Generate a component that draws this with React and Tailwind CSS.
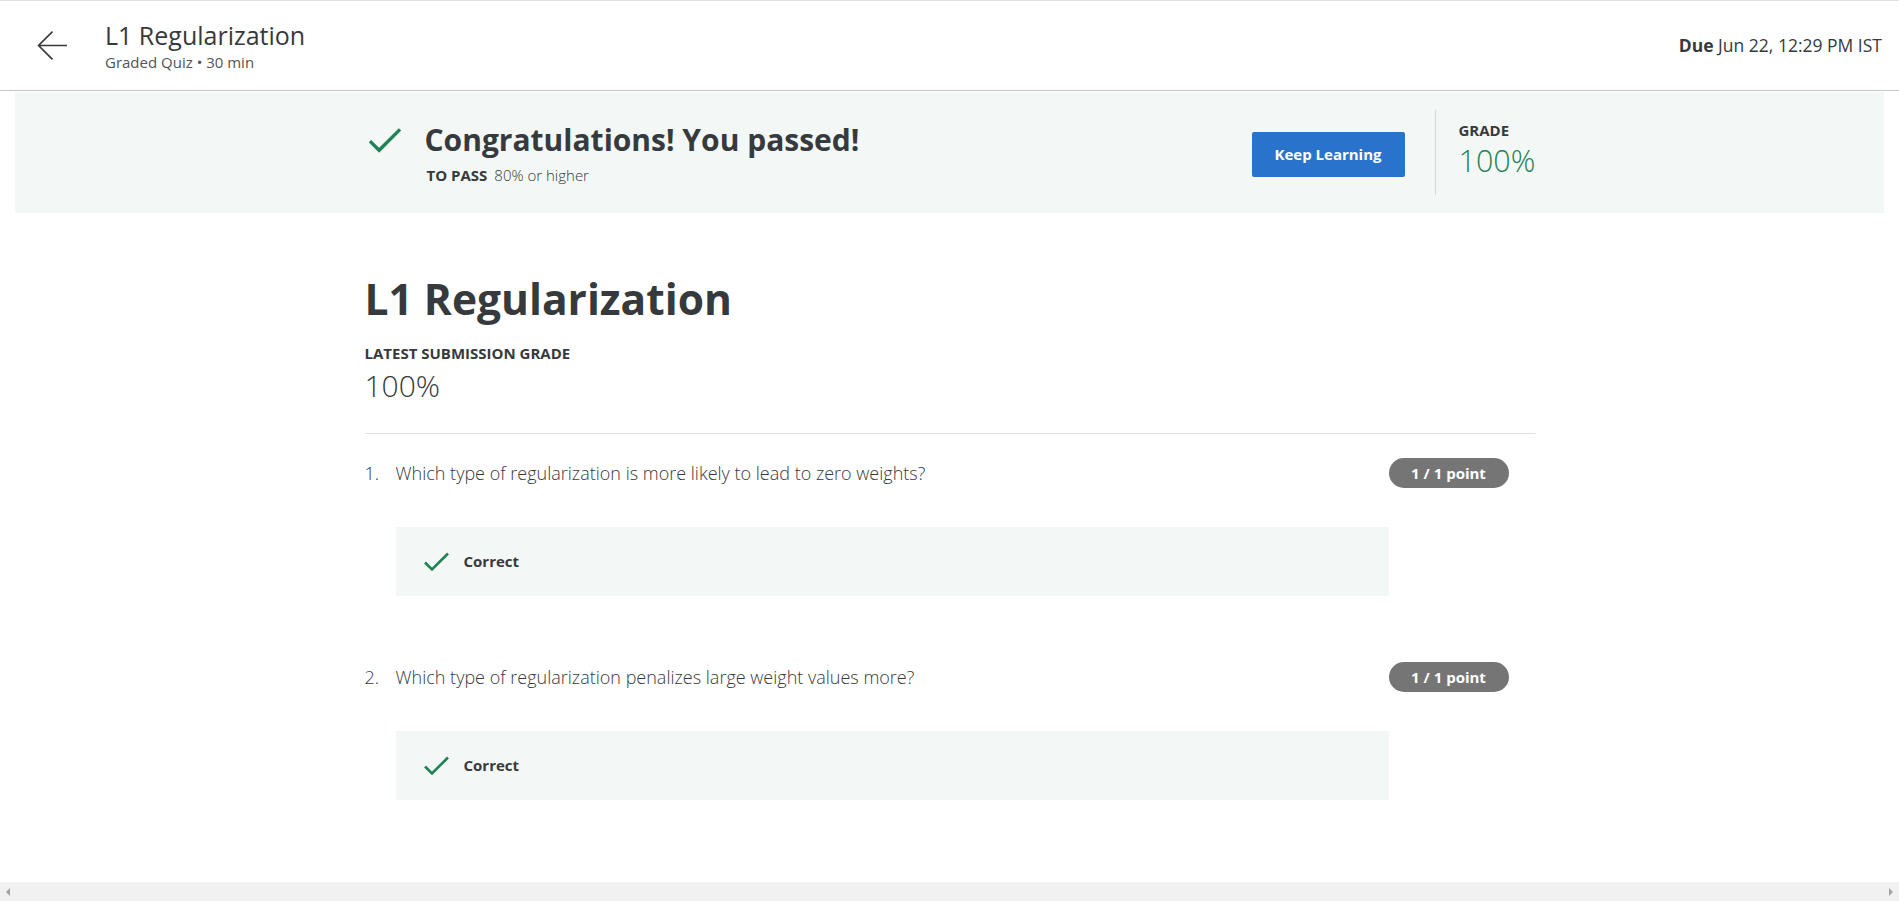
import React from "react";

const questions = [
    { n: 1, text: "Which type of regularization is more likely to lead to zero weights?" },
    { n: 2, text: "Which type of regularization penalizes large weight values more?" },
];

function Check({ className }) {
    return (
        <svg viewBox="0 0 26 20" className={className} fill="none">
            <path d="M1.5 10.5 L8.5 17.5 L24.5 1.5" stroke="#1f8354" strokeWidth="2.6" />
        </svg>
    );
}

export default function App() {
    return (
        <div
            className="flex flex-col h-screen overflow-hidden bg-white text-[#373a3c]"
            style={{ fontFamily: '"Open Sans", "Liberation Sans", sans-serif' }}
        >
            {/* HEADER */}
            <div className="flex items-center justify-between h-[91px] border-t border-[#e1e1e1] border-b border-b-[#c6c6c6] shrink-0">
                <div className="flex items-center">
                    <button className="ml-[37px] mr-[37px]">
                        <svg viewBox="0 0 30 30" className="w-[31px] h-[31px]" fill="none">
                            <path d="M29 15 H2 M15 1.5 L1.5 15 L15 28.5" stroke="#373a3c" strokeWidth="1.6" />
                        </svg>
                    </button>
                    <div>
                        <div className="text-[25px] leading-[32px] text-[#373a3c]">L1 Regularization</div>
                        <div className="text-[15px] leading-[20px] mt-[1px] text-[#545454]">Graded Quiz • 30 min</div>
                    </div>
                </div>
                <div className="pr-[17px] text-[17.5px]">
                    <span className="font-bold">Due</span> Jun 22, 12:29 PM IST
                </div>
            </div>

            {/* PASS BANNER */}
            <div className="mx-[15px] mt-[1px] bg-[#f3f8f6] py-[18px] shrink-0">
                <div className="w-[1170px] mx-auto flex items-center h-[85px]">
                    <div className="flex-1 flex items-start pl-[3px]">
                        <Check className="w-[34px] h-[27px] mt-[7px]" />
                        <div className="ml-[23px]">
                            <div className="text-[30px] leading-[40px] font-bold text-[#373a3c]">
                                Congratulations! You passed!
                            </div>
                            <div className="text-[15px] leading-[20px] mt-[5px] ml-[2px]">
                                <span className="font-bold">TO PASS</span>
                                <span className="ml-[7px] font-light">80% or higher</span>
                            </div>
                        </div>
                    </div>
                    <button className="w-[153px] h-[45px] rounded-[2px] bg-[#2a73cc] text-white text-[15px] font-bold mt-[4px]">
                        Keep Learning
                    </button>
                    <div className="ml-[30px] h-full border-l border-[#d9d9d9] pl-[23px] w-[100px] pt-[11px] flex flex-col gap-[2px]">
                        <div className="text-[15px] leading-[18px] font-bold">GRADE</div>
                        <div className="text-[30.5px] leading-[38px] font-light text-[#1f8354]">100%</div>
                    </div>
                </div>
            </div>

            {/* MAIN */}
            <div className="flex-1 min-h-0">
                <div className="w-[1170px] mx-auto pt-[58px]">
                    <h1 className="text-[42.5px] leading-[56px] font-bold text-[#373a3c]">L1 Regularization</h1>
                    <div className="mt-[17px] text-[15px] leading-[18px] font-bold">LATEST SUBMISSION GRADE</div>
                    <div className="text-[30px] leading-[40px] font-light mt-[4px]">100%</div>
                    <div className="mt-[27px] border-t border-[#e1e1e1]" />

                    {questions.map((q) => (
                        <div key={q.n} className="flex pt-[25px] pb-[42px]">
                            <div className="w-[32px] text-[18px] leading-[28px] font-light">{q.n}.</div>
                            <div className="flex-1">
                                <div className="text-[18px] leading-[28px] font-light">{q.text}</div>
                                <div className="mt-[40px] w-[993px] h-[69px] bg-[#f3f8f6] flex items-center pl-[27px]">
                                    <Check className="w-[27px] h-[20px]" />
                                    <span className="ml-[14px] text-[15px] font-bold">Correct</span>
                                </div>
                            </div>
                            <div className="mr-[26px] shrink-0">
                                <span className="inline-flex items-center justify-center w-[120px] h-[30px] rounded-full bg-[#757575] text-white text-[15px] font-bold -mt-[1px]">
                                    1 / 1 point
                                </span>
                            </div>
                        </div>
                    ))}
                </div>
            </div>

            {/* HORIZONTAL SCROLLBAR */}
            <div className="h-[19px] bg-[#f1f1f1] flex items-center justify-between px-[6px] shrink-0">
                <svg viewBox="0 0 4 8" className="w-[4px] h-[8px]">
                    <path d="M4 0 L0 4 L4 8 Z" fill="#a3a3a3" />
                </svg>
                <svg viewBox="0 0 4 8" className="w-[4px] h-[8px]">
                    <path d="M0 0 L4 4 L0 8 Z" fill="#a3a3a3" />
                </svg>
            </div>
        </div>
    );
}
